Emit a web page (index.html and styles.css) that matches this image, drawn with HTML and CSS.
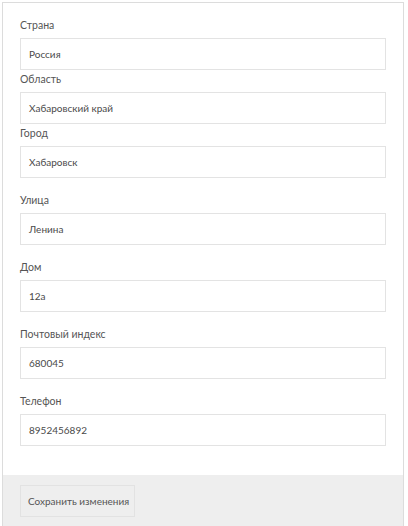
FILE: index.html
```html
<!DOCTYPE html>
<html lang="ru">
<head>
<meta charset="utf-8">
<link rel="stylesheet" href="styles.css">
</head>
<body>
<form class="card">
  <div class="fields">
    <div class="field tight">
      <label class="label">Страна</label>
      <div class="input">Россия</div>
    </div>
    <div class="field tight">
      <label class="label">Область</label>
      <div class="input">Хабаровский край</div>
    </div>
    <div class="field">
      <label class="label">Город</label>
      <div class="input">Хабаровск</div>
    </div>
    <div class="field">
      <label class="label">Улица</label>
      <div class="input">Ленина</div>
    </div>
    <div class="field">
      <label class="label">Дом</label>
      <div class="input">12а</div>
    </div>
    <div class="field">
      <label class="label">Почтовый индекс</label>
      <div class="input">680045</div>
    </div>
    <div class="field">
      <label class="label">Телефон</label>
      <div class="input">8952456892</div>
    </div>
  </div>
  <div class="footer">
    <button type="button" class="btn">Сохранить изменения</button>
  </div>
</form>
</body>
</html>
```

FILE: styles.css
```css
html, body {
  margin: 0;
  padding: 0;
  background: #ffffff;
}
body {
  font-family: Lato, "Open Sans", sans-serif;
  color: #555555;
}
.card {
  margin: 2px 4px 0 2px;
  border: 1px solid #dcdcdc;
  border-bottom: none;
  background: #ffffff;
  display: flex;
  flex-direction: column;
  height: 523px;
  overflow: hidden;
}
.fields {
  padding: 13px 17px 16px 17px;
  display: flex;
  flex-direction: column;
}
.field {
  display: flex;
  flex-direction: column;
  margin-bottom: 13px;
}
.field.tight {
  margin-bottom: 0;
}
.label {
  font-size: 10.5px;
  line-height: 18px;
  color: #555555;
  margin-bottom: 4px;
}
.input {
  height: 32px;
  box-sizing: border-box;
  border: 1px solid #e3e3e3;
  padding: 0 8px;
  display: flex;
  align-items: center;
  font-size: 10px;
  color: #4a4a4a;
}
.footer {
  background: #eeeeee;
  padding: 10px 17px;
  flex: 1;
}
.btn {
  height: 32px;
  padding: 0 5px 0 7px;
  border: 1px solid #e2e2e2;
  background: #eeeeee;
  font-family: Lato, "Open Sans", sans-serif;
  font-size: 10px;
  color: #555555;
  cursor: pointer;
}
```
